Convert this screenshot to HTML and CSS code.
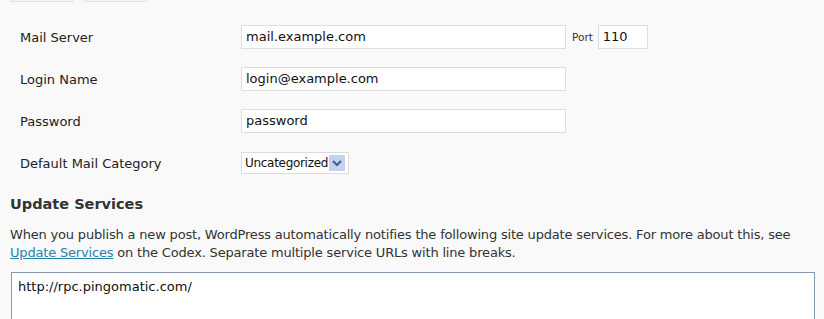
FILE: index.html
```html
<!DOCTYPE html>
<html>
<head>
<meta charset="utf-8">
<link rel="stylesheet" href="styles.css">
</head>
<body>
<div class="top-buttons"><span class="tb tb1"></span><span class="tb tb2"></span></div>
<div class="form">
  <label class="lbl">Mail Server</label>
  <div class="field"><div class="input wide">mail.example.com</div><span class="port-lbl">Port</span><div class="input port">110</div></div>
  <label class="lbl">Login Name</label>
  <div class="field"><div class="input wide">login@example.com</div></div>
  <label class="lbl">Password</label>
  <div class="field"><div class="input wide">password</div></div>
  <label class="lbl">Default Mail Category</label>
  <div class="field"><div class="select"><span class="sel-text">Uncategorized</span><span class="sel-arrow"><svg width="16" height="16" viewBox="0 0 16 16"><path d="M4 6 L8 10 L12 6" fill="none" stroke="#4d6185" stroke-width="2.2"/></svg></span></div></div>
</div>
<h3 class="heading">Update Services</h3>
<p class="desc">When you publish a new post, WordPress automatically notifies the following site update services. For more about this, see <a href="#" class="link">Update Services</a> on the Codex. Separate multiple service URLs with line breaks.</p>
<div class="textarea">http://rpc.pingomatic.com/</div>
</body>
</html>
```
FILE: styles.css
```css
html, body {
  margin: 0;
  padding: 0;
  background: #f9f9f9;
  font-family: "DejaVu Sans", Verdana, sans-serif;
  color: #222;
  overflow: hidden;
}
.top-buttons {
  display: flex;
  gap: 11px;
  padding-left: 10px;
  height: 2px;
}
.tb {
  display: block;
  width: 61px;
  height: 1px;
  border: 1px solid #e3e3e3;
  border-top: none;
  background: #f2f2f2;
}
.form {
  display: grid;
  grid-template-columns: 221px 1fr;
  row-gap: 18px;
  align-items: center;
  padding-left: 20px;
  margin-top: 23px;
}
.lbl {
  font-size: 13px;
  color: #222;
}
.field {
  display: flex;
  align-items: center;
  height: 24px;
}
.input {
  box-sizing: border-box;
  height: 24px;
  border: 1px solid #dedede;
  background: #fff;
  font-size: 13px;
  line-height: 22px;
  padding: 0 4px;
  color: #111;
}
.wide { width: 325px; }
.port-lbl {
  font-size: 10.5px;
  color: #333;
  margin: 0 5px 0 6px;
}
.port { width: 50px; }
.select {
  box-sizing: border-box;
  width: 108px;
  height: 22px;
  border: 1px solid #dcdcdc;
  background: #fff;
  display: flex;
  align-items: center;
  padding-left: 3px;
}
.sel-text {
  font-size: 12px;
  color: #111;
  font-family: "DejaVu Sans", Tahoma, sans-serif;
  letter-spacing: -0.3px;
}
.sel-arrow {
  display: flex;
  width: 16px;
  height: 16px;
  background: #c1d2f0;
  margin-left: 1px;
  border-radius: 1px;
}
.heading {
  margin: 19px 0 0 10px;
  font-size: 14.5px;
  font-weight: bold;
  color: #333;
  line-height: 20px;
}
.desc {
  margin: 12px 0 0 10px;
  font-size: 13px;
  line-height: 18px;
  color: #333;
  width: 812px;
  letter-spacing: -0.18px;
}
.link {
  color: #2583ad;
}
.textarea {
  box-sizing: border-box;
  margin: 10px 0 0 11px;
  width: 804px;
  height: 80px;
  border: 1px solid #8797ab;
  background: #fff;
  font-size: 13px;
  padding: 6px 6px;
  color: #111;
}
```
